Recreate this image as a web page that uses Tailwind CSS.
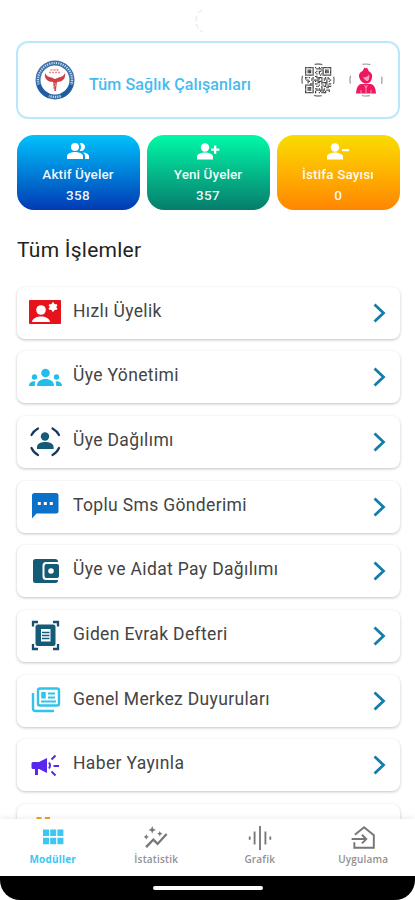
<!DOCTYPE html>
<html lang="tr">
<head>
<meta charset="utf-8">
<meta name="viewport" content="width=device-width, initial-scale=1">
<title>Modüller</title>
<script src="https://cdn.jsdelivr.net/npm/@tailwindcss/browser@4"></script>
</head>
<body class="bg-white">
<div class="relative flex h-[900px] w-[415px] flex-col overflow-hidden bg-white font-['Roboto',sans-serif] text-[#303030]">
  <div class="h-[41px] shrink-0 pl-[195px] pt-[9px]">
    <svg class="h-6 w-3" viewBox="0 0 12 24" fill="none" stroke="#e2e2e2"><path d="M7 1Q1 4 1 12q0 8 7 11" stroke-dasharray="5 3"/></svg>
  </div>
  <header class="ml-[16px] mr-[15px] flex h-[78px] shrink-0 items-center rounded-[12px] border-2 border-[#bce7fb] pl-[17px] pr-[15px]">
    <svg class="h-10 w-10 shrink-0" viewBox="0 0 40 40">
      <circle cx="20" cy="20" r="19.5" fill="#3c70a8"/>
      <circle cx="20" cy="20" r="17" fill="none" stroke="#c9d9e9" stroke-width="2.200" stroke-dasharray="1.2 1.1"/>
      <path d="M2 25a19 19 0 0 0 11 13l2.500-6A14 14 0 0 1 7 24zM38 25a19 19 0 0 1-11 13l-2.500-6A14 14 0 0 0 33 24z" fill="#1d5da3"/>
      <circle cx="20" cy="20" r="14.500" fill="#fff"/>
      <path d="M10 13c-1 6 3 9 8 9l1.200 9h1.600L22 22c5 0 9-3 8-9-1.500 3-3.500 4-6.500 4.500L20 19l-3.500-1.500C13.500 17 11.500 16 10 13z" fill="#cf4145"/>
      <path d="M14 12.500h12M15.500 10h9" stroke="#e58c8e" stroke-width="1.500" stroke-dasharray="2 1"/>
      <path d="M18 23q5 1 2 3t0 4" stroke="#e79b9b" fill="none"/>
    </svg>
    <p class="ml-[14px] mt-[9px] w-[200px] whitespace-nowrap text-[16px] font-medium leading-5 tracking-[0.12px] text-[#45bcef]">Tüm Sağlık Çalışanları</p>
    <svg class="ml-auto h-[34px] w-[34px] shrink-0" viewBox="0 0 34 34">
      <circle cx="17" cy="17" r="16" fill="none" stroke="#777" stroke-width="1.300" stroke-dasharray="8 17.130" stroke-dashoffset="4"/>
      <g id="qr" fill="#444"></g>
    </svg>
    <svg class="ml-[14px] h-[34px] w-[34px] shrink-0" viewBox="0 0 34 34">
      <circle cx="17" cy="17" r="16" fill="none" stroke="#999" stroke-width="1.200" stroke-dasharray="8 17.130" stroke-dashoffset="4"/>
      <path d="M7 30.500c.5-6 2-9 5.500-9.500h9c3.500.5 5 3.500 5.500 9.500z" fill="#ee1762"/>
      <path d="M10.500 15c-1.500-4 1-6 3-7l2-3.500 1.500 1 1-1 2 4c3 1.500 4 4 2.500 8-1 3-3 4-5.500 4s-5-1.500-6.500-5.500z" fill="#ee1762"/>
      <path d="M14 14.500q4.500 0 6-3 .8 5-1 6.200t-5-3.200z" fill="#f9a7c2"/>
      <path d="m15.500 22 1.500 3 1.500-3M17 25v5M12 27v3.500m10-3.500v3.500" stroke="#fbb5cb" fill="none" stroke-width=".8"/>
    </svg>
  </header>
  <section class="ml-[16.5px] mr-[15.500px] mt-4 grid h-[75px] shrink-0 grid-cols-3 gap-[7px] text-center text-[13.500px] font-medium text-white/95">
    <div class="flex flex-col items-center rounded-[17px] bg-linear-to-b from-[#00c2fb] to-[#0638b4] pt-[4px]">
      <svg class="h-6 w-[26px]" viewBox="0 0 24 24" fill="#fff"><path d="M16.670 13.130C18.040 14.060 19 15.320 19 17v3h4v-3c0-2.180-3.570-3.470-6.330-3.870zM15 12c2.210 0 4-1.790 4-4s-1.790-4-4-4c-.47 0-.91.100-1.330.240C14.500 5.270 15 6.580 15 8s-.5 2.730-1.330 3.760c.42.140.860.240 1.330.240z"/><circle cx="9" cy="8" r="4"/><path d="M9 13c-2.670 0-8 1.340-8 4v3h16v-3c0-2.660-5.330-4-8-4z"/></svg>
      <p class="mt-px leading-5 tracking-[0.1px]">Aktif Üyeler</p><p class="mt-px leading-5 tracking-[0.3px]">358</p>
    </div>
    <div class="flex flex-col items-center rounded-[17px] bg-linear-to-b from-[#00faa8] to-[#067d6c] pt-[4px]">
      <svg class="h-6 w-[26px]" viewBox="0 0 24 24" fill="#fff"><circle cx="9" cy="8.500" r="4.200"/><path d="M1 20.500v-3c0-2.660 5.330-4 8-4s8 1.340 8 4v3zM18 6.500h2.300v3h3v2.300h-3v3H18v-3h-3V9.500h3z"/></svg>
      <p class="mt-px leading-5 tracking-[0.1px]">Yeni Üyeler</p><p class="mt-px leading-5 tracking-[0.3px]">357</p>
    </div>
    <div class="flex flex-col items-center rounded-[17px] bg-linear-to-b from-[#f8dc00] to-[#ff8500] pt-[4px]">
      <svg class="h-6 w-[26px]" viewBox="0 0 24 24" fill="#fff"><circle cx="9" cy="8.500" r="4.200"/><path d="M1 20.500v-3c0-2.660 5.330-4 8-4s8 1.340 8 4v3zM16 10h7v2.200h-7z"/></svg>
      <p class="mt-px leading-5 tracking-[0.15px]">İstifa Sayısı</p><p class="mt-px leading-5">0</p>
    </div>
  </section>
  <h1 class="mx-[17px] mt-[26px] h-7 shrink-0 whitespace-nowrap text-[21px] leading-7 tracking-[0.25px] text-[#222]">Tüm İşlemler</h1>
  <main id="rows" class="mt-[21.500px] flex min-h-0 flex-1 flex-col gap-[12.700px] overflow-hidden pl-[16.500px] pr-[15.500px] pt-px"></main>
  <nav class="relative grid h-[57px] shrink-0 grid-cols-4 bg-white pl-px text-center font-['Open_Sans',sans-serif] text-[10px] font-semibold tracking-[0.2px] text-[#909090] shadow-[0_-1px_6px_rgba(0,0,0,0.08)]">
    <div class="flex flex-col items-center pt-[6px] font-bold text-[#3cc6f3]">
      <svg class="h-6 w-6" viewBox="0 0 24 24" fill="currentColor"><path d="M2 4.500h6v6.500H2zm7.200 0h6v6.500h-6zm7.200 0h6v6.500h-6zM2 12.700h6v6.500H2zm7.200 0h6v6.500h-6zm7.200 0h6v6.500h-6z"/></svg>
      <span class="mt-[2px] leading-4">Modüller</span>
    </div>
    <div class="flex flex-col items-center pt-[6px]">
      <svg class="h-[26px] w-[26px]" viewBox="0 0 24 24" fill="#777"><path d="m2 19.500 7.500-7.500 4 4L21 7.500l1.600 1.600-9.100 9.900-4-4L3.700 21.200zM8.500 1l1 2.500 2.500 1-2.500 1-1 2.500-1-2.500-2.500-1 2.500-1zM3 8.500l.8 1.700 1.700.8-1.700.8L3 13.500l-.8-1.700L.5 11l1.700-.8zM15.500 5.500l.8 1.700 1.700.8-1.700.8-.8 1.700-.8-1.700L13 8l1.700-.8z"/></svg>
      <span class="leading-4">İstatistik</span>
    </div>
    <div class="flex flex-col items-center pt-[6px]">
      <svg class="h-[26px] w-[26px]" viewBox="0 0 24 24" fill="none" stroke="#777" stroke-width="1.700"><path d="M2.500 10.500v3M7 6v12m5-17v22m5-17v12m4.500-7.500v3"/></svg>
      <span class="leading-4">Grafik</span>
    </div>
    <div class="flex flex-col items-center pt-[6px]">
      <svg class="h-[26px] w-[26px]" viewBox="0 0 24 24" fill="none" stroke="#777" stroke-width="1.800"><path d="M4.500 9 13 2l9 7.500V21H4v-5M1.500 13H15m-4-4 4 4-4 4"/></svg>
      <span class="leading-4">Uygulama</span>
    </div>
  </nav>
  <footer class="relative h-6 shrink-0 bg-white">
    <div class="flex h-6 justify-center rounded-b-[20px] bg-black pt-[10px]"><span class="h-[4px] w-[110px] rounded-full bg-white"></span></div>
  </footer>
</div>
<script>
const rows = [
  ['Hızlı Üyelik', '<path fill="#e5141c" d="M3 6h30q1 0 1 1v22q0 1-1 1H3q-1 0-1-1V7q0-1 1-1z"/><g fill="#fff"><circle cx="14" cy="16" r="4.800"/><path d="M5 28c0-3.500 5-5.500 9-5.500s9 2 9 5.500z"/><circle cx="26" cy="13" r="3.500"/><path stroke="#fff" stroke-width="2" d="M26 8.500v9m-4-6.700 8 4.400m0-4.400-8 4.400"/></g>'],
  ['Üye Yönetimi', '<g fill="#22bdea"><circle cx="18.500" cy="14" r="4.300"/><path d="M10 27c0-5 4-7 8.500-7s8.500 2 8.500 7z"/><circle cx="7.500" cy="18" r="2.700"/><circle cx="29.500" cy="18" r="2.700"/><path d="M2 27c0-3 2-5 6.500-4.800Q7.500 24 7.800 27zm33 0c0-3-2-5-6.500-4.800Q29.500 24 29.200 27z"/></g>'],
  ['Üye Dağılımı', '<g fill="#145b77"><circle cx="18" cy="13.500" r="4.200"/><path d="M10 26v-2c0-4 5-5 8.300-5s8.300 1 8.300 5v2z"/></g><path fill="none" stroke="#17395f" stroke-width="2.200" stroke-linecap="round" d="M4.500 12q2-4 6.500-6.500m14.500 0q4.500 2.500 6.500 6.500M4.500 25q2 4.500 6.500 7m14.500 0q4.500-2.500 6.500-7"/>'],
  ['Toplu Sms Gönderimi', '<path fill="#0b70ca" d="M7.500 5H29q2.500 0 2.500 2.500V23q0 2.500-2.500 2.500H9.500L5 30.500V7.500Q5 5 7.500 5z"/><path fill="#fff" d="M10.800 14h3v3h-3zm6 0h3v3h-3zm6 0h3v3h-3z"/>'],
  ['Üye ve Aidat Pay Dağılımı', '<path fill="#145b77" d="M8.500 6H28q3 0 3 2.500V9H19q-3.500 0-3.500 3.500v11Q15.500 27 19 27h12v.5q0 2.500-3 2.500H8.500Q6 30 6 27.500v-19Q6 6 8.500 6z"/><rect fill="#145b77" x="17.500" y="11" width="14.500" height="14" rx="2"/><circle cx="24" cy="18" r="2.800" fill="#fff"/>'],
  ['Giden Evrak Defteri', '<path fill="#145b77" d="M11 7.500h15q2.500 0 2.500 2.500v16.500Q28.500 29 26 29H11q-2.500 0-2.500-2.500V10q0-2.500 2.500-2.500z"/><path fill="#fff" d="M14 12h9.500v12.500H14z"/><path stroke="#145b77" stroke-width="1.500" d="M15 15.500h7.500M15 18.500h7.500M15 21.500h7.500"/><path fill="none" stroke="#1b4d73" stroke-width="2.300" d="M6 9.500V5h5m15 0h5v4.500M6 27v5h5m15 0h5v-5"/>'],
  ['Genel Merkez Duyuruları', '<g fill="none" stroke="#32c2ea" stroke-width="2.400"><rect x="11" y="6.500" width="21" height="17" rx="2"/><path d="M6 11v15.500Q6 29 8.500 29H27"/><path d="M21 11.500h7m-7 4h7M14 19.500h15" stroke-width="2"/><path d="M16.500 10v6.500" stroke-width="4.500"/></g>'],
  ['Haber Yayınla', '<path fill="#5a28ea" d="M6 15h6l8-4v15l-8-4h-1v6H8v-6H6q-1.500 0-1.500-1.500v-4Q4.500 15 6 15z"/><path fill="none" stroke="#5a28ea" stroke-width="2" d="M22 15.500q2 3 0 6M24.500 12.500l4-4m-2 10.500H32M24.500 24.500l4 4"/>'],
  ['', '<path fill="#f2a31b" d="M9.500 5h5v5h-5zm8.500 0h5v5h-5z"/>']
];
document.getElementById('rows').innerHTML = rows.map(([t, icon]) => `<div class="flex h-[52px] shrink-0 items-center rounded-[8px] bg-white pl-[10px] pr-[14px] shadow-[0_1px_3px_rgba(0,0,0,0.24)]"><svg class="h-9 w-9 shrink-0 -mt-px" viewBox="0 0 36 36">${icon}</svg><span class="ml-[10.500px] -mt-[4px] whitespace-nowrap text-[17.500px] leading-6 tracking-[0.35px] text-[#444]">${t}</span><svg class="ml-auto h-5 w-[13px] shrink-0" viewBox="0 0 13 20" fill="none" stroke="#147eaa" stroke-width="2.800"><path d="m1.500 1.500 9 8.500-9 8.500"/></svg></div>`).join('');

// QR code: pseudo-random modules with three finder squares
let seed = 11, qr = '';
for (let y = 0; y < 21; y++) for (let x = 0; x < 21; x++) {
  seed = (seed * 1103515245 + 12345) % 2147483648;
  const fx = x > 13 ? 20 - x : x, fy = y > 13 ? 20 - y : y;
  const zone = fx < 8 && fy < 8 && !(x > 13 && y > 13);
  const ring = Math.max(Math.abs(fx - 3), Math.abs(fy - 3));
  if (zone ? ring === 3 || ring < 2 : seed / 2147483648 < 0.5) qr += `<rect x="${4 + x * 1.25}" y="${4 + y * 1.25}" width="1.250" height="1.250"/>`;
}
document.getElementById('qr').innerHTML = qr;
</script>
</body>
</html>
